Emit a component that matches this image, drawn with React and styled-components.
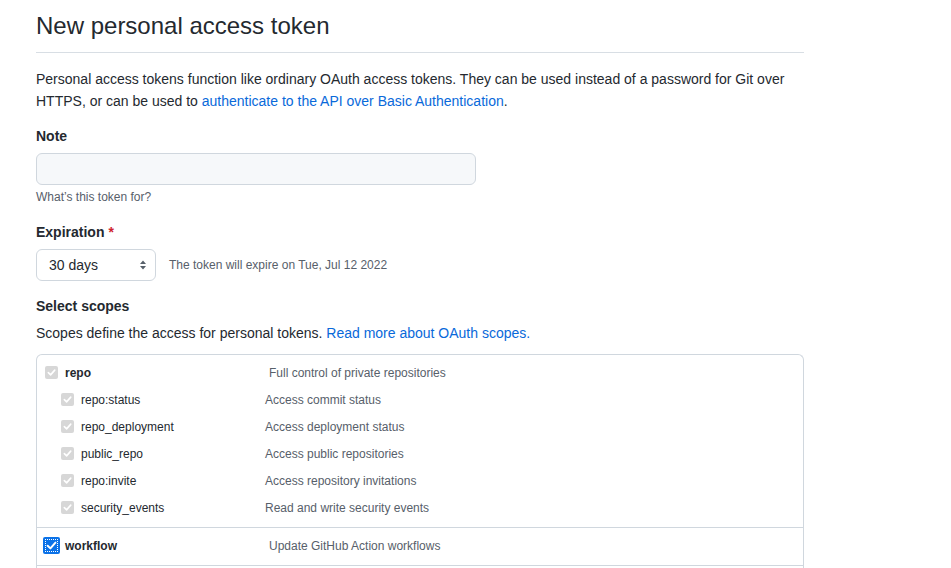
import React from "react";
import styled, { createGlobalStyle } from "styled-components";

const Global = createGlobalStyle`
  html, body { margin: 0; padding: 0; background: #ffffff; }
  body { font-family: "Liberation Sans", Arial, sans-serif; color: #24292f; font-size: 14px; }
  * { box-sizing: border-box; }
`;

const Page = styled.div`
  width: 768px;
  margin-left: 36px;
  padding-top: 8px;
`;

const Subhead = styled.div`
  padding-bottom: 8px;
  border-bottom: 1px solid #d8dee4;
`;

const Heading = styled.h2`
  margin: 0;
  font-size: 24px;
  font-weight: 400;
  line-height: 36px;
  color: #24292f;
`;

const Intro = styled.p`
  margin: 15px 0 0;
  font-size: 14px;
  line-height: 22px;
`;

const Link = styled.a`
  color: #0969da;
  text-decoration: none;
`;

const Label = styled.div`
  margin-top: ${(p) => p.$top}px;
  font-size: 14px;
  font-weight: 700;
  line-height: 21px;
`;

const Required = styled.span`
  color: #cf222e;
  margin-left: 4px;
`;

const TextInput = styled.input`
  display: block;
  margin-top: 6px;
  width: 440px;
  height: 32px;
  padding: 5px 12px;
  font-family: inherit;
  font-size: 14px;
  background: #f6f8fa;
  border: 1px solid #d0d7de;
  border-radius: 6px;
  outline: none;
`;

const Note = styled.div`
  margin-top: 3px;
  font-size: 12px;
  line-height: 18px;
  color: #57606a;
`;

const SelectRow = styled.div`
  display: flex;
  align-items: center;
  gap: 13px;
  margin-top: 6px;
`;

const SelectBox = styled.div`
  width: 120px;
  height: 32px;
  display: flex;
  align-items: center;
  justify-content: space-between;
  padding: 0 8px 0 12px;
  border: 1px solid #d0d7de;
  border-radius: 6px;
  background: #ffffff;
  font-size: 14px;
  color: #24292f;
`;

const Hint = styled.span`
  font-size: 12px;
  color: #57606a;
`;

const Text = styled.div`
  margin-top: 6px;
  font-size: 14px;
  line-height: 21px;
`;

const ScopeBox = styled.div`
  margin-top: 10px;
  border: 1px solid #d0d7de;
  border-bottom: none;
  border-radius: 6px 6px 0 0;
  height: 214px;
  overflow: hidden;
`;

const Group = styled.div`
  padding: 4px 0 6px 8px;
  border-bottom: 1px solid #d0d7de;
`;

const Row = styled.div`
  display: flex;
  align-items: center;
  height: 27px;
  padding-left: ${(p) => (p.$child ? 16 : 0)}px;
  font-size: 12px;
`;

const CheckSlot = styled.span`
  width: 13px;
  height: 13px;
  margin-right: 7px;
  display: flex;
  align-items: center;
  justify-content: center;
  flex: none;
`;

const GrayCheck = styled.span`
  width: 13px;
  height: 13px;
  border-radius: 2px;
  background: #d7d7d7;
  display: flex;
  align-items: center;
  justify-content: center;
`;

const BlueCheck = styled.span`
  width: 17px;
  height: 17px;
  flex: none;
  border-radius: 2px;
  background: #0b72e8;
  display: flex;
  align-items: center;
  justify-content: center;
  outline: 1px dotted #ffffff;
  outline-offset: -3px;
`;

const ScopeName = styled.span`
  width: ${(p) => p.$w}px;
  flex: none;
  color: #24292f;
  font-weight: ${(p) => (p.$bold ? 700 : 400)};
`;

const ScopeDesc = styled.span`
  color: #57606a;
`;

const Tick = ({ size = 9 }) => (
  <svg width={size} height={size} viewBox="0 0 10 10">
    <path d="M1.5 5.2 L4 7.6 L8.6 2.4" fill="none" stroke="#ffffff" strokeWidth="1.8" strokeLinecap="round" strokeLinejoin="round" />
  </svg>
);

const SelectArrows = () => (
  <svg width="8" height="12" viewBox="0 0 8 12">
    <path d="M4 1.5 L7 5 H1 Z M4 10.5 L7 7 H1 Z" fill="#57606a" />
  </svg>
);

const subScopes = [
  ["repo:status", "Access commit status"],
  ["repo_deployment", "Access deployment status"],
  ["public_repo", "Access public repositories"],
  ["repo:invite", "Access repository invitations"],
  ["security_events", "Read and write security events"],
];

export default function App() {
  return (
    <>
      <Global />
      <Page>
        <Subhead>
          <Heading>New personal access token</Heading>
        </Subhead>
        <Intro>
          Personal access tokens function like ordinary OAuth access tokens. They can be used instead of a password for Git over
          HTTPS, or can be used to <Link href="#">authenticate to the API over Basic Authentication</Link>.
        </Intro>

        <Label $top={14}>Note</Label>
        <TextInput type="text" />
        <Note>What’s this token for?</Note>

        <Label $top={16}>
          Expiration<Required>*</Required>
        </Label>
        <SelectRow>
          <SelectBox>
            <span>30 days</span>
            <SelectArrows />
          </SelectBox>
          <Hint>The token will expire on Tue, Jul 12 2022</Hint>
        </SelectRow>

        <Label $top={15}>Select scopes</Label>
        <Text>
          Scopes define the access for personal tokens. <Link href="#">Read more about OAuth scopes.</Link>
        </Text>

        <ScopeBox>
          <Group>
            <Row>
              <CheckSlot>
                <GrayCheck>
                  <Tick />
                </GrayCheck>
              </CheckSlot>
              <ScopeName $bold $w={204}>repo</ScopeName>
              <ScopeDesc>Full control of private repositories</ScopeDesc>
            </Row>
            {subScopes.map(([name, desc]) => (
              <Row $child key={name}>
                <CheckSlot>
                  <GrayCheck>
                    <Tick />
                  </GrayCheck>
                </CheckSlot>
                <ScopeName $w={184}>{name}</ScopeName>
                <ScopeDesc>{desc}</ScopeDesc>
              </Row>
            ))}
          </Group>
          <Group>
            <Row>
              <CheckSlot>
                <BlueCheck>
                  <Tick size={11} />
                </BlueCheck>
              </CheckSlot>
              <ScopeName $bold $w={204}>workflow</ScopeName>
              <ScopeDesc>Update GitHub Action workflows</ScopeDesc>
            </Row>
          </Group>
        </ScopeBox>
      </Page>
    </>
  );
}
